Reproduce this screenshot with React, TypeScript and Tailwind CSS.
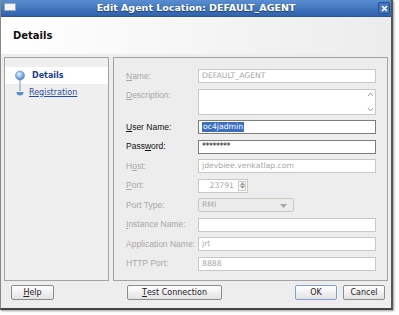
import React from "react";

const F = { fontFamily: '"DejaVu Sans", "Liberation Sans", sans-serif' };
const L = { fontFamily: '"Liberation Sans", "DejaVu Sans", sans-serif' };

function U({ children }: { children: React.ReactNode }) {
  return <span className="underline underline-offset-[1px]">{children}</span>;
}

function Label({ children, enabled }: { children: React.ReactNode; enabled?: boolean }) {
  return (
    <div
      style={L}
      className={`w-[72px] shrink-0 whitespace-nowrap text-[8.5px] leading-none ${enabled ? "text-[#111]" : "text-[#a8a8a8]"}`}
    >
      {children}
    </div>
  );
}

function Input({
  value,
  enabled,
  w,
  dark,
  children,
}: {
  value?: React.ReactNode;
  enabled?: boolean;
  w?: string;
  dark?: boolean;
  children?: React.ReactNode;
}) {
  return (
    <div
      className={`${w ?? "w-[178px]"} h-full flex items-center px-[3px] bg-white border ${
        dark ? "border-[#7d7d7d]" : "border-[#c9c9c1]"
      } text-[7.7px] leading-none ${enabled ? "text-[#111]" : "text-[#a8a8a8]"} relative`}
    >
      {value}
      {children}
    </div>
  );
}

function Row({ label, enabled, children, h }: { label: React.ReactNode; enabled?: boolean; children: React.ReactNode; h?: string }) {
  return (
    <div className={`flex items-start ${h ?? "h-[14px]"}`}>
      <div className="h-[14px] flex items-center">
        <Label enabled={enabled}>{label}</Label>
      </div>
      {children}
    </div>
  );
}

function Button({ children, w, def }: { children: React.ReactNode; w: string; def?: boolean }) {
  return (
    <div
      className={`${w} h-[15px] flex items-center justify-center rounded-[2px] border ${
        def ? "border-[#7f9fcf]" : "border-[#8c8c8c]"
      } bg-gradient-to-b from-[#ffffff] to-[#e2e2e2] text-[8px] leading-none text-[#222]`}
    >
      {children}
    </div>
  );
}

export default function App() {
  return (
    <div className="w-[399px] h-[315px] bg-white overflow-hidden" style={F}>
      <div className="w-[393px] h-[310px] flex flex-col bg-[#ededed] border-l border-l-[#888] border-r-2 border-r-[#555] border-b-2 border-b-[#444] shadow-[1px_1px_2px_rgba(0,0,0,0.4)]">
        {/* Title bar */}
        <div className="h-[17px] shrink-0 flex items-center relative bg-gradient-to-b from-[#5b8dd0] to-[#2f62ae] border-b border-[#2a5596]">
          <div className="absolute left-[3px] top-[3px] w-[12px] h-[8px] rounded-[1px] bg-[#f4f4f4] border border-[#9aa8bd]" />
          <div className="flex-1 text-center text-white font-bold text-[9.5px] leading-none [text-shadow:0_1px_1px_rgba(0,0,0,0.5)]">
            Edit Agent Location: DEFAULT_AGENT
          </div>
          <div className="absolute right-[1px] top-[2px] w-[12px] h-[12px] rounded-[2px] bg-[#4778bf] border border-[#23508f] flex items-center justify-center">
            <svg width="7" height="7" viewBox="0 0 7 7">
              <path d="M1 1 L6 6 M6 1 L1 6" stroke="white" strokeWidth="1.6" />
            </svg>
          </div>
        </div>
        {/* Header */}
        <div className="h-[37px] shrink-0 flex items-center pl-[12px] bg-gradient-to-r from-[#ffffff] to-[#ececec] text-[10px] font-bold text-[#111]">
          Details
        </div>
        {/* Body */}
        <div className="flex gap-[4px] px-[3px] pt-[3px] h-[227px] shrink-0">
          {/* Left nav */}
          <div className="w-[105px] h-[224px] border border-[#a3a3a3] bg-[#efefef] pt-[9px] relative">
            <div className="h-[17px] bg-white flex items-center pl-[27px] text-[8px] font-bold text-[#1d3c8f] leading-none">
              Details
            </div>
            <div className="h-[17px] flex items-center pl-[24px] text-[8px] text-[#2b4c9c] leading-none underline underline-offset-[1px]">
              Registration
            </div>
            <svg className="absolute left-[9px] top-[12px]" width="12" height="28" viewBox="0 0 12 28">
              <defs>
                <radialGradient id="g1" cx="0.4" cy="0.35" r="0.7">
                  <stop offset="0" stopColor="#e8f2ff" />
                  <stop offset="0.6" stopColor="#7fb0e6" />
                  <stop offset="1" stopColor="#3f78c2" />
                </radialGradient>
              </defs>
              <line x1="6" y1="8" x2="6" y2="21" stroke="#6f95c9" strokeWidth="1" />
              <circle cx="6" cy="5.5" r="4.5" fill="url(#g1)" stroke="#5d8ccc" strokeWidth="0.6" />
              <path d="M2.5 22 A3.5 3.5 0 0 0 9.5 22 Z" fill="#5a8ed2" />
            </svg>
          </div>
          {/* Form */}
          <div className="flex-1 h-[224px] border border-[#a3a3a3] bg-[#ededed] pl-[12px] pt-[11px] flex flex-col gap-[5.5px]">
            <Row label={<><U>N</U>ame:</>}>
              <Input value="DEFAULT_AGENT" />
            </Row>
            <Row label={<><U>D</U>escription:</>} h="h-[26px]">
              <Input>
                <div className="absolute right-[1px] top-[2px] bottom-[2px] w-[8px] flex flex-col justify-between items-center">
                  <svg width="7" height="5" viewBox="0 0 7 5"><path d="M1 4 L3.5 1 L6 4" stroke="#9a9a9a" fill="none" /></svg>
                  <svg width="7" height="5" viewBox="0 0 7 5"><path d="M1 1 L3.5 4 L6 1" stroke="#9a9a9a" fill="none" /></svg>
                </div>
              </Input>
            </Row>
            <Row label={<><U>U</U>ser Name:</>} enabled>
              <Input
                enabled
                dark
                value={<span className="bg-[#3b6fc0] text-white px-[1px] py-[1px]">oc4jadmin</span>}
              />
            </Row>
            <Row label={<>Pass<U>w</U>ord:</>} enabled>
              <Input enabled dark value={<span className="text-[8px] tracking-[-0.5px]">********</span>} />
            </Row>
            <Row label={<>H<U>o</U>st:</>}>
              <Input value="jdevbiee.venkatlap.com" />
            </Row>
            <Row label={<><U>P</U>ort:</>}>
              <Input w="w-[50px]">
                <div className="flex-1 text-right pr-[10px]">23791</div>
                <div className="absolute right-[1px] top-[1px] bottom-[1px] w-[8px] border border-[#c9c9c1] flex flex-col">
                  <div className="flex-1 flex items-center justify-center border-b border-[#d8d8d0]">
                    <svg width="5" height="3" viewBox="0 0 5 3"><path d="M0 3 L2.5 0 L5 3 Z" fill="#a0a0a0" /></svg>
                  </div>
                  <div className="flex-1 flex items-center justify-center">
                    <svg width="5" height="3" viewBox="0 0 5 3"><path d="M0 0 L2.5 3 L5 0 Z" fill="#a0a0a0" /></svg>
                  </div>
                </div>
              </Input>
            </Row>
            <Row label="Port Type:">
              <div className="w-[96px] h-full flex items-center px-[3px] bg-[#ececec] border border-[#c9c9c1] rounded-[2px] text-[7.7px] leading-none text-[#a8a8a8] relative">
                RMI
                <svg className="absolute right-[6px] top-[5px]" width="7" height="4" viewBox="0 0 7 4">
                  <path d="M0 0 L3.5 4 L7 0 Z" fill="#a8a8a8" />
                </svg>
              </div>
            </Row>
            <Row label={<><U>I</U>nstance Name:</>}>
              <Input value="" />
            </Row>
            <Row label="Application Name:">
              <Input value="jrt" />
            </Row>
            <Row label="HTTP Port:">
              <Input value="8888" />
            </Row>
          </div>
        </div>
        {/* Footer */}
        <div className="flex-1 flex items-start pt-[4px] pl-[10px]">
          <Button w="w-[43px]"><U>H</U>elp</Button>
          <div className="ml-[73px]">
            <Button w="w-[95px]"><U>T</U>est Connection</Button>
          </div>
          <div className="ml-[73px]">
            <Button w="w-[42px]" def>OK</Button>
          </div>
          <div className="ml-[6px]">
            <Button w="w-[42px]">Cancel</Button>
          </div>
        </div>
      </div>
    </div>
  );
}
